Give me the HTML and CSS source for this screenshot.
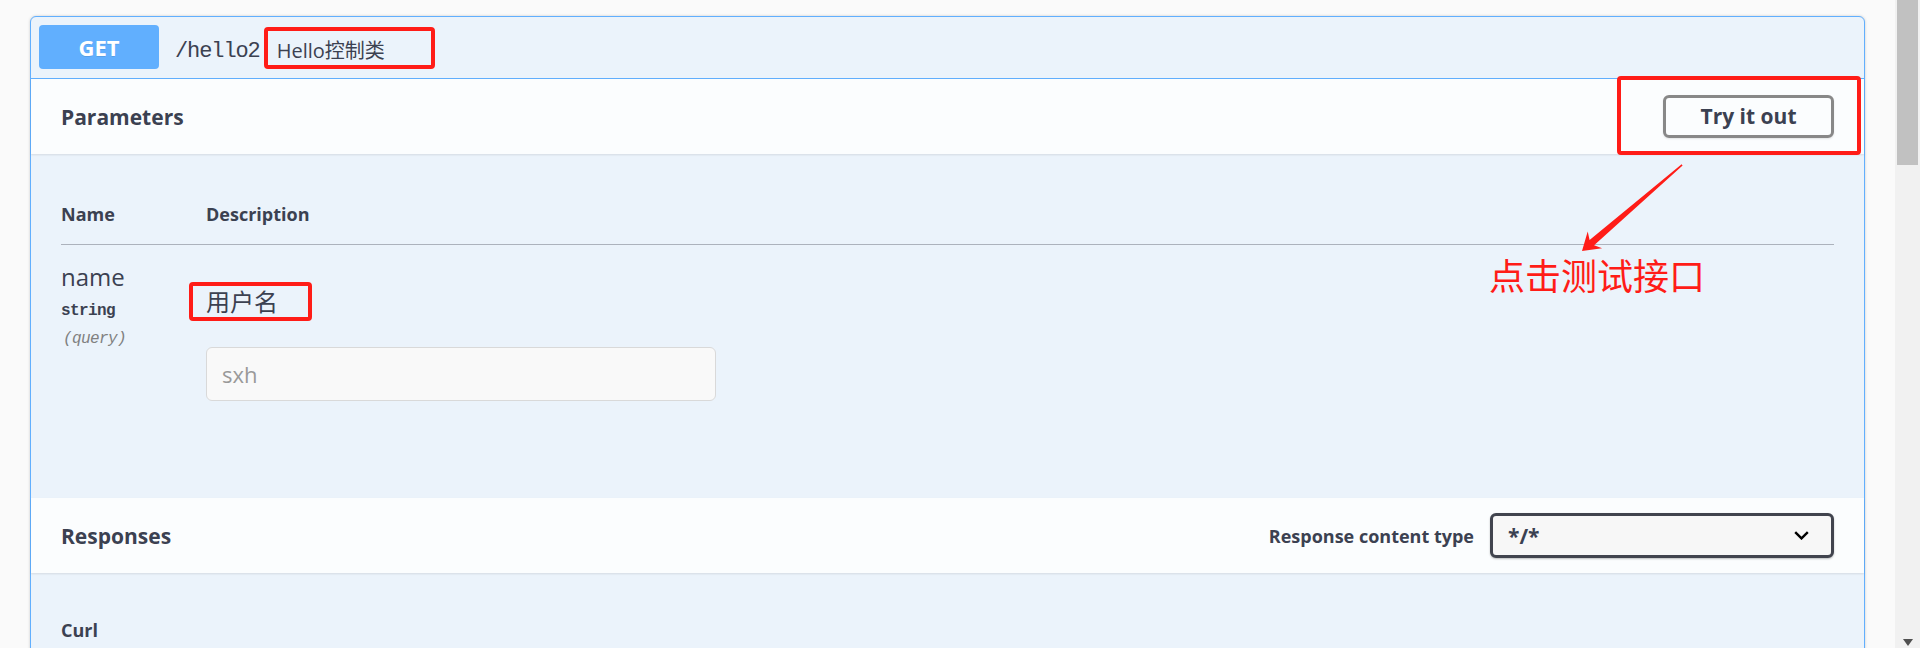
FILE: index.html
```html
<!DOCTYPE html>
<html lang="zh-CN">
<head>
<meta charset="utf-8">
<title>Swagger UI</title>
<link rel="stylesheet" href="styles.css">
</head>
<body>
<div class="page">
  <main class="content">
    <div class="opblock">
      <div class="summary">
        <span class="method">GET</span>
        <span class="path">/hello2</span>
        <span class="desc">Hello控制类</span>
      </div>
      <div class="section-header">
        <h4>Parameters</h4>
        <button class="try">Try it out</button>
      </div>
      <div class="table-container">
        <table class="params">
          <thead>
            <tr><th class="col-name">Name</th><th>Description</th></tr>
          </thead>
          <tbody>
            <tr>
              <td class="col-name">
                <div class="p-name">name</div>
                <div class="p-type">string</div>
                <div class="p-in">(query)</div>
              </td>
              <td>
                <p class="p-desc">用户名</p>
                <input class="p-input" type="text" placeholder="sxh">
              </td>
            </tr>
          </tbody>
        </table>
      </div>
      <div class="section-header">
        <h4>Responses</h4>
        <div class="rct">
          <span>Response content type</span>
          <div class="select">
            <span>*/*</span>
            <svg class="chev" width="15" height="9" viewBox="0 0 15 9"><path d="M1.2 1.2 L7.5 7.4 L13.8 1.2" fill="none" stroke="#000" stroke-width="2.4"/></svg>
          </div>
        </div>
      </div>
      <div class="responses-inner">
        <h4 class="curl">Curl</h4>
      </div>
    </div>
  </main>
  <div class="scrollbar">
    <div class="thumb"></div>
    <div class="sb-arrow"></div>
  </div>
</div>
<div class="annot">
  <div class="mark mark-desc"></div>
  <div class="mark mark-try"></div>
  <div class="mark mark-param"></div>
  <svg class="arrow" width="140" height="110" viewBox="0 0 140 110"><polygon points="12,101 32.1,98.2 24.1,95.2 112.6,15.5 111.6,14.3 19.6,89.9 17.7,81.6" fill="#ff1c17"/></svg>
  <div class="note">点击测试接口</div>
</div>
</body>
</html>
```

FILE: styles.css
```css
* { box-sizing: border-box; }
html, body { margin: 0; height: 100%; }
body {
  background: #fafafa;
  font-family: "Open Sans", "Noto Sans CJK SC", sans-serif;
  color: #3b4151;
  overflow: hidden;
  position: relative;
}
.page { display: flex; height: 648px; overflow: hidden; }
.content { flex: 1; min-width: 0; padding: 16px 30px 0; }

.opblock {
  border: 1px solid #61affe;
  border-radius: 6px;
  background: #ebf3fb;
  box-shadow: 0 0 3px rgba(0,0,0,.19);
}

.summary {
  display: flex;
  align-items: center;
  padding: 8px 8px 9px;
  border-bottom: 1px solid #61affe;
}
.method {
  width: 120px;
  padding: 9px 0;
  line-height: 26px;
  text-align: center;
  background: #61affe;
  color: #fff;
  font-weight: 700;
  font-size: 22px;
  border-radius: 4px;
  text-shadow: 0 1px 0 rgba(0,0,0,.1);
}
.path {
  font-family: "Liberation Mono", monospace;
  font-size: 22px;
  letter-spacing: -1.1px;
  padding: 8px 15px 0 16px;
  color: #3b4151;
}
.desc { font-size: 20px; padding: 4px 0 0 2px; }

.section-header {
  display: flex;
  align-items: center;
  justify-content: space-between;
  min-height: 75px;
  padding: 12px 30px;
  background: rgba(255,255,255,.8);
  box-shadow: 0 1px 2px rgba(0,0,0,.1);
}
.section-header h4 { margin: 0; font-size: 21px; font-weight: 700; }
.try {
  font-family: inherit;
  font-size: 21px;
  font-weight: 700;
  color: #3b4151;
  background: transparent;
  border: 3px solid #888;
  border-radius: 6px;
  width: 171px;
  height: 43px;
  padding: 0;
  line-height: 37px;
  box-shadow: 0 1px 2px rgba(0,0,0,.1);
}

.table-container { padding: 30px 30px 65px; }
.params { width: 100%; border-collapse: collapse; }
.params th {
  text-align: left;
  font-size: 18px;
  font-weight: 700;
  padding: 18px 0;
  line-height: 24px;
  border-bottom: 1px solid rgba(59,65,81,.2);
}
.params td { padding: 15px 0; vertical-align: top; }
.col-name { width: 145px; }
.p-name { font-size: 24px; line-height: 33px; }
.p-type {
  font-family: "Liberation Mono", monospace;
  font-size: 16px;
  letter-spacing: -0.6px;
  font-weight: 700;
  padding: 5px 0;
  line-height: 27px;
}
.p-in {
  font-family: "Liberation Mono", monospace;
  font-size: 16px;
  letter-spacing: -0.6px;
  font-style: italic;
  color: #808080;
  line-height: 18px;
  padding-left: 2px;
}
.p-desc { margin: 24px 0 27px; font-size: 24px; line-height: 36px; }
.p-input {
  display: block;
  width: 510px;
  height: 54px;
  margin: 0 0 17px;
  padding: 11px 15px;
  font-family: inherit;
  font-size: 22px;
  line-height: 30px;
  border: 1px solid #d9d9d9;
  border-radius: 6px;
  background: #f9f9f9;
  color: #3b4151;
}
.p-input::placeholder { color: #999; }

.rct { display: flex; align-items: center; gap: 16px; font-size: 18px; font-weight: 700; }
.select {
  width: 344px;
  height: 45px;
  display: flex;
  align-items: center;
  justify-content: space-between;
  padding: 0 22px 0 15px;
  border: 3px solid #41444e;
  border-radius: 6px;
  background: #f7f7f7;
  box-shadow: 0 1px 2px rgba(0,0,0,.25);
  font-size: 21px;
  font-weight: 700;
}
.chev { display: block; }

.responses-inner { padding: 30px; }
.curl { margin: 15px 0 0; font-size: 18px; font-weight: 700; line-height: 24px; }

.scrollbar {
  width: 25px;
  flex: none;
  background: #f1f1f1;
  display: flex;
  flex-direction: column;
  align-items: center;
}
.thumb { width: 21px; height: 165px; background: #c1c1c1; }
.sb-arrow {
  margin-top: auto;
  margin-bottom: 2px;
  width: 0;
  height: 0;
  border-left: 5.5px solid transparent;
  border-right: 5.5px solid transparent;
  border-top: 7px solid #505050;
}

.annot { position: absolute; left: 0; top: 0; width: 1920px; height: 648px; pointer-events: none; }
.mark { position: absolute; border: 4px solid #ff1c17; border-radius: 4px; }
.mark-desc { left: 264px; top: 27px; width: 171px; height: 42px; }
.mark-try { left: 1617px; top: 76px; width: 244px; height: 79px; }
.mark-param { left: 189px; top: 282px; width: 123px; height: 39px; }
.arrow { position: absolute; left: 1570px; top: 150px; }
.note {
  position: absolute;
  left: 1489px;
  top: 256px;
  font-family: "Noto Sans CJK SC", sans-serif;
  font-size: 36px;
  line-height: 36px;
  color: #ff1c17;
}
```
